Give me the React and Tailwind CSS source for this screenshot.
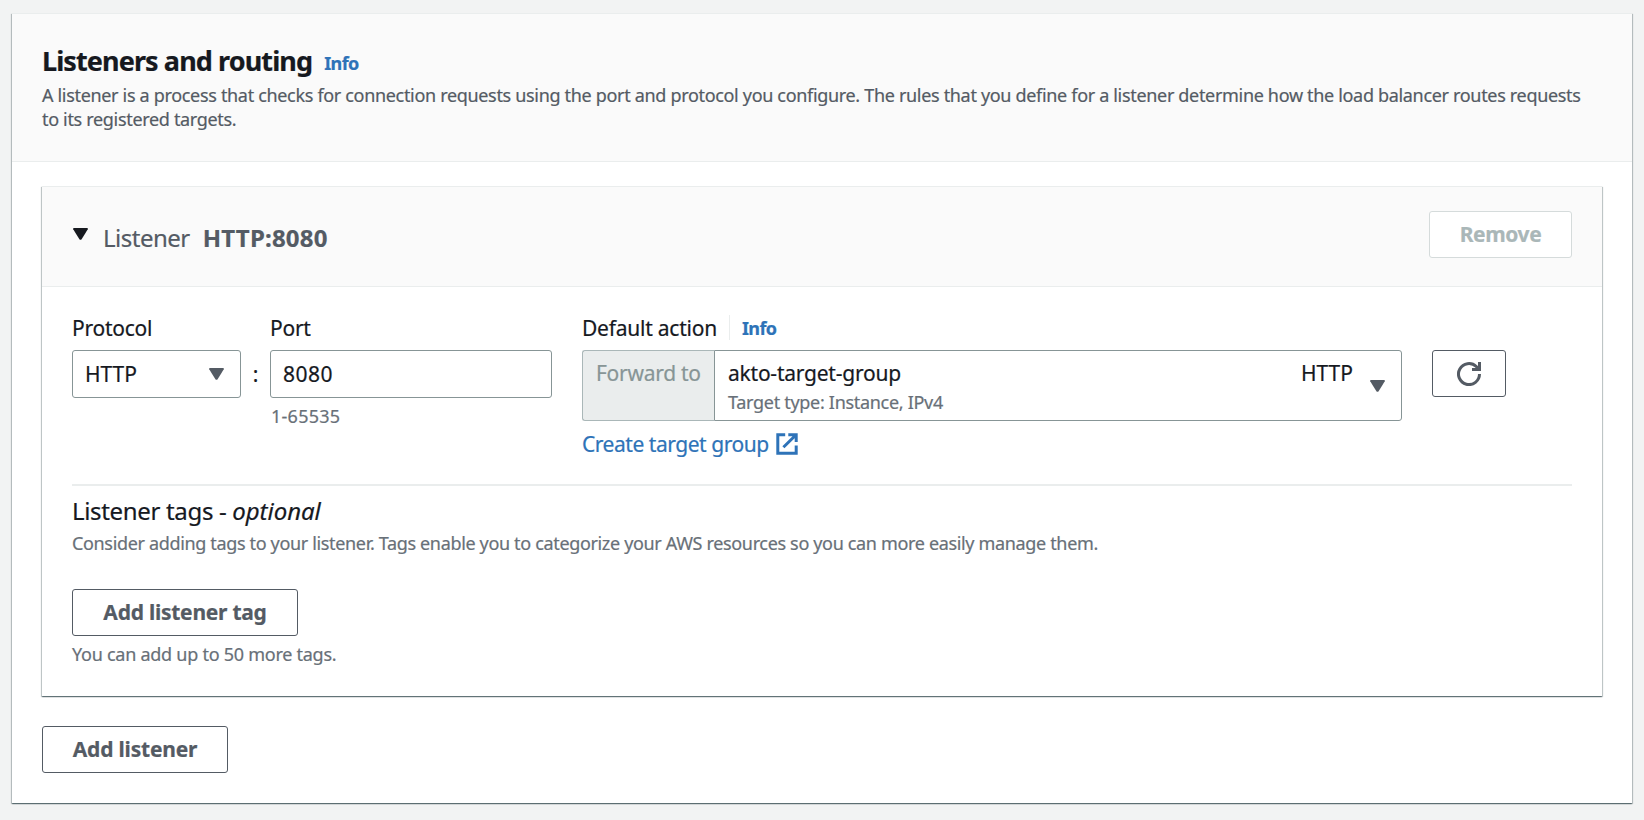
const cardShadow =
  'border-t border-[#eaeded] bg-white shadow-[0_1px_1px_0_rgba(0,28,36,0.4),1px_1px_1px_0_rgba(0,28,36,0.2),-1px_1px_1px_0_rgba(0,28,36,0.2)]';

function Caret({ className }) {
  return (
    <svg width="15" height="12" viewBox="0 0 15 12" className={className} fill="currentColor">
      <path d="M1 0h13q1.2 0 .8 1.2L8.6 11.2q-1.1 1.3-2.2 0L.2 1.2Q-.2 0 1 0Z" />
    </svg>
  );
}

function ExternalIcon() {
  return (
    <svg width="22" height="22" viewBox="0 0 22 22" fill="none" stroke="currentColor" strokeWidth="3">
      <path d="M9.2 1.8H1.8v18.4h18.4v-7.6" />
      <path d="M12.3 1.8h7.9V9M19.6 2.3 7.4 14.3" />
    </svg>
  );
}

function RefreshIcon() {
  return (
    <svg width="24" height="24" viewBox="0 0 24 24" fill="none" stroke="currentColor" strokeWidth="3">
      <path d="M22.5 12a10.5 10.5 0 1 1-3.2-7.5L22 7.5" />
      <path d="M22.5 0v7.5H15" />
    </svg>
  );
}

function Button({ children, className }) {
  return (
    <button
      className={`flex h-[47px] items-center justify-center rounded-[3px] border bg-white text-[21px] font-bold leading-[30px] whitespace-nowrap ${className}`}
    >
      {children}
    </button>
  );
}

function Label({ children }) {
  return <div className="mb-2 flex h-[30px] items-center text-[21px] leading-[30px] tracking-[-0.26px]">{children}</div>;
}

function ListenerFields() {
  return (
    <div className="flex h-[174px] items-start border-b-2 border-[#eaeded]">
      <div className="w-[169px]">
        <Label>
          <span className="pt-px">Protocol</span>
        </Label>
        <div className="flex h-12 items-center justify-between rounded-[3px] border border-[#879596] pr-4 pl-3 text-[21px]">
          <span className="pt-0.5 tracking-[-0.05px]">HTTP</span>
          <Caret className="text-[#545b64]" />
        </div>
      </div>
      <div className="mt-[38px] flex h-12 w-[29px] items-center justify-center pt-0.5 text-[21px]">:</div>
      <div className="w-[282px]">
        <Label>
          <span className="pt-px">Port</span>
        </Label>
        <div className="flex h-12 items-center rounded-[3px] border border-[#879596] pt-0.5 pl-3 text-[21px] tracking-[0.5px]">
          8080
        </div>
        <div className="mt-1.5 pl-px text-[18px] leading-6 tracking-[0.25px] text-[#687078]">1-65535</div>
      </div>
      <div className="ml-[30px] w-[820px]">
        <Label>
          <span className="pt-px tracking-[-0.23px]">Default action</span>
          <span className="mr-3 ml-3 h-[25px] w-px bg-[#eaeded]" />
          <a className="pt-px text-[18px] font-bold tracking-[-0.6px] text-[#2e73b8]">Info</a>
        </Label>
        <div className="flex h-[71px]">
          <div className="w-[132px] rounded-l-[3px] border border-r-0 border-[#aab7b8] bg-[#eaeded] pt-[7px] pl-[13px] text-[21px] leading-[30px] tracking-[-0.28px] whitespace-nowrap text-[#879596]">
            Forward to
          </div>
          <div className="flex flex-1 rounded-r-[3px] border border-[#879596] pr-4 pl-3">
            <div className="flex-1 pt-[7px]">
              <div className="pl-px text-[21px] leading-[30px] tracking-[-0.23px]">akto-target-group</div>
              <div className="mt-[2px] pl-px text-[18px] leading-6 tracking-[-0.3px] text-[#687078]">Target type: Instance, IPv4</div>
            </div>
            <div className="mr-[17px] pt-[7px] text-[21px] leading-[30px]">HTTP</div>
            <Caret className="mt-[29px] text-[#545b64]" />
          </div>
        </div>
        <a className="mt-2 flex h-[30px] items-center gap-[7px] text-[21px] leading-[30px] tracking-[-0.46px] text-[#2e73b8]">
          Create target group
          <ExternalIcon />
        </a>
      </div>
      <Button className="mt-[38px] ml-[30px] w-[74px] border-[#545b64] text-[#545b64]">
        <RefreshIcon />
      </Button>
    </div>
  );
}

function ListenerCard() {
  return (
    <section className={`h-[510px] ${cardShadow}`}>
      <header className="flex h-[100px] items-start justify-between border-b border-[#eaeded] bg-[#fafafa] px-[30px] pt-6">
        <div className="flex items-start pt-[9px]">
          <Caret className="mt-2 ml-px" />
          <h3 className="ml-[15px] flex gap-[13px] text-[24px] leading-[36px] text-[#545b64]">
            <span className="tracking-[-0.5px]">Listener</span>
            <b className="tracking-[0.2px]">HTTP:8080</b>
          </h3>
        </div>
        <Button className="w-[143px] border-[#d5dbdb] pb-0.5 tracking-[-0.4px] text-[#aab7b8]">Remove</Button>
      </header>
      <div className="px-[30px] pt-[25px]">
        <ListenerFields />
        <h3 className="mt-[7px] text-[24px] leading-[36px]">
          <span className="tracking-[-0.33px]">Listener tags - </span>
          <i className="tracking-[-0.05px]">optional</i>
        </h3>
        <p className="mt-[2px] text-[18px] leading-6 tracking-[-0.34px] text-[#687078]">
          Consider adding tags to your listener. Tags enable you to categorize your AWS resources so you can more easily
          manage them.
        </p>
        <Button className="mt-[34px] w-[226px] border-[#545b64] pb-0.5 tracking-[-0.25px] text-[#545b64]">
          Add listener tag
        </Button>
        <p className="mt-1.5 text-[18px] leading-6 tracking-[-0.26px] text-[#687078]">You can add up to 50 more tags.</p>
      </div>
    </section>
  );
}

export default function App() {
  return (
    <div className="h-[820px] bg-[#f2f3f3] pt-[13px] pr-3 pl-3 font-['Noto_Sans','Open_Sans',sans-serif] text-[#16191f] [-webkit-text-stroke:0.2px]">
      <section className={`h-[790px] ${cardShadow}`}>
        <header className="h-[148px] border-b border-[#eaeded] bg-[#fafafa] pt-[29px] pr-[46px] pl-[30px]">
          <div className="flex h-10 items-start gap-3 leading-[36px]">
            <h2 className="text-[27px] font-bold tracking-[-0.9px]">Listeners and routing</h2>
            <a className="pt-[2px] text-[18px] font-bold tracking-[-0.6px] text-[#2e73b8]">Info</a>
          </div>
          <p className="text-[18px] leading-6 tracking-[-0.322px] text-[#545b64]">
            A listener is a process that checks for connection requests using the port and protocol you configure. The
            rules that you define for a listener determine how the load balancer routes requests to its registered
            targets.
          </p>
        </header>
        <div className="px-[30px] pt-6">
          <ListenerCard />
          <Button className="mt-[30px] w-[186px] border-[#545b64] pb-0.5 tracking-[-0.2px] text-[#545b64]">
            Add listener
          </Button>
        </div>
      </section>
    </div>
  );
}
